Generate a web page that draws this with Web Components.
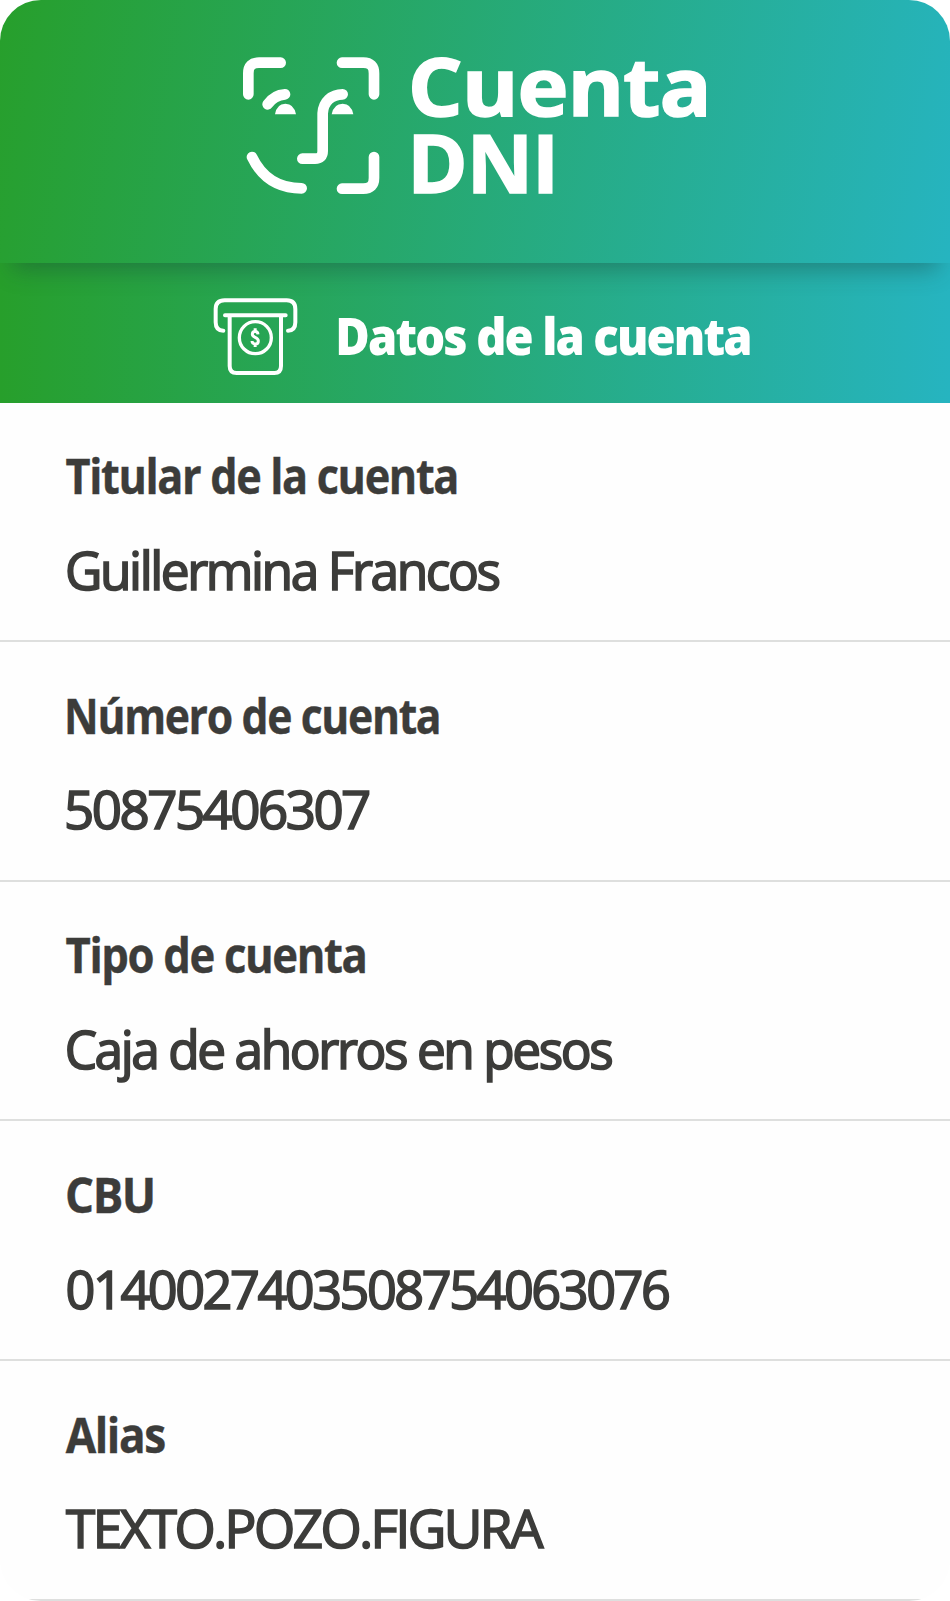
<!DOCTYPE html>
<html lang="es"><head><meta charset="utf-8"><title>Cuenta DNI</title>
<style>body{margin:0;background:#fff;font-family:"Open Sans","Noto Sans",sans-serif}</style></head><body>
<account-card></account-card>
<script>
// A single line of text whose drawn glyphs start at x and span exactly w pixels.
class FitText extends HTMLElement{
 connectedCallback(){
  const r=this.attachShadow({mode:'open'}),w=+this.getAttribute('w'),x=+(this.getAttribute('x')||0);
  r.innerHTML=`<style>:host{display:block;white-space:nowrap;width:${w}px}span{display:inline-block;transform-origin:0 50%}</style><span><slot></slot></span>`;
  const cs=getComputedStyle(this),c=document.createElement('canvas').getContext('2d');
  c.font=`${cs.fontWeight} ${cs.fontSize} ${cs.fontFamily}`;
  if(cs.letterSpacing!=='normal')c.letterSpacing=cs.letterSpacing;
  const m=c.measureText(this.textContent.trim());
  const s=w/(m.actualBoundingBoxRight+m.actualBoundingBoxLeft);
  r.querySelector('span').style.transform=`translateX(${x+m.actualBoundingBoxLeft*s}px) scaleX(${s})`;
 }
}
customElements.define('fit-text',FitText);

class BrandHeader extends HTMLElement{
 connectedCallback(){this.attachShadow({mode:'open'}).innerHTML=`<style>
 :host{display:flex;box-sizing:border-box;height:263px;padding:45px 0 0 230px;gap:21px;position:relative;z-index:1;color:#fff;background:linear-gradient(100deg,#279f2b 0%,#26b4c0 100%);box-shadow:0 18px 22px -12px rgba(25,65,60,.42)}
 svg{width:160px;height:160px;flex:none}
 .n{font-weight:700;font-size:80px;line-height:77px;padding-top:.5px;letter-spacing:-1px;-webkit-text-stroke:1.500px #fff}
 </style><svg viewBox="0 0 480 480" fill="none" stroke="#fff" stroke-width="32" stroke-linecap="round"><path d="M55 148V85Q55 53 87 53H152M336 53H400Q432 53 432 85V148M432 336V399Q432 431 400 431H336M66 336C95 397 145 430 215 430M217 341H255Q278 341 278 318V205C280 170 305 148 338 148M113 178Q132 150 165 148"/><path stroke="none" fill="#fff" d="M135 208Q140 176 166 176Q192 176 198 208ZM305 208Q311 176 338 176Q364 176 370 208Z"/></svg>
 <div class="n"><fit-text x="1" w="294">Cuenta</fit-text><fit-text x="3.5" w="138">DNI</fit-text></div>`}
}
customElements.define('brand-header',BrandHeader);

class SectionBar extends HTMLElement{
 connectedCallback(){this.attachShadow({mode:'open'}).innerHTML=`<style>
 :host{display:flex;box-sizing:border-box;height:140px;padding:22px 0 0 200px;gap:28px;color:#fff;background:linear-gradient(90deg,#279f2b,#26b4c0)}
 svg{width:110px;height:100px;flex:none}
 .t{font-size:51px;font-weight:800;line-height:60px;padding-top:20px;letter-spacing:-2px}
 </style><svg viewBox="0 0 330 300" fill="none" stroke="#fff" stroke-width="12" stroke-linecap="round"><path d="M70 137Q47 137 47 112V72Q47 46 74 46H260Q286 46 286 72V112Q286 137 264 137M75 91H257M89 91V243Q89 264 110 264H223Q243 264 243 243V91"/><circle cx="166" cy="158" r="48" stroke-width="10"/><path stroke-width="9" stroke-linecap="butt" d="M174 148C173 137 157 137 157 148C157 159 175 155 175 168C175 180 157 180 156 168M165.500 130V142M165.500 174V186"/></svg><div class="t"><fit-text w="412">${this.textContent}</fit-text></div>`}
}
customElements.define('section-bar',SectionBar);

class DataRow extends HTMLElement{
 connectedCallback(){const a=k=>this.getAttribute(k);this.attachShadow({mode:'open'}).innerHTML=`<style>
 :host{display:block;box-sizing:border-box;height:239.67px;padding:41.700px 65px 0;border-bottom:2px solid #dedfde;color:#3c3c3a}
 :host(:first-of-type){height:239px;padding-top:41.400px}
 .k{font-size:47.500px;font-weight:700;line-height:64px;letter-spacing:-1.500px;-webkit-text-stroke:.4px}
 .v{font-size:52.500px;font-weight:500;line-height:80px;margin-top:21.700px;letter-spacing:-2.500px;-webkit-text-stroke:1.700px}
 </style><fit-text class="k" x="${a('kx')}" w="${a('kw')}">${a('label')}</fit-text><fit-text class="v" x="${+a('vx')+.6}" w="${a('vw')-.8}">${a('value')}</fit-text>`}
}
customElements.define('data-row',DataRow);

class AccountCard extends HTMLElement{
 connectedCallback(){this.attachShadow({mode:'open'}).innerHTML=`<style>:host{display:block;width:950px;height:1601px;overflow:hidden;border-radius:41px;background:#fefefe}</style>
 <brand-header></brand-header><section-bar>Datos de la cuenta</section-bar>
 <data-row label="Titular de la cuenta" value="Guillermina Francos" kx=".5" kw="391.5" vx="2.3" vw="432"></data-row>
 <data-row label="Número de cuenta" value="50875406307" kx="2.7" kw="371.5" vx="1.5" vw="303"></data-row>
 <data-row label="Tipo de cuenta" value="Caja de ahorros en pesos" kx=".5" kw="300" vx="2" vw="545"></data-row>
 <data-row label="CBU" value="0140027403508754063076" kx="2" kw="85.500" vx="2" vw="602"></data-row>
 <data-row label="Alias" value="TEXTO.POZO.FIGURA" kx=".7" kw="99" vx=".5" vw="479"></data-row>`}
}
customElements.define('account-card',AccountCard);
</script></body></html>
